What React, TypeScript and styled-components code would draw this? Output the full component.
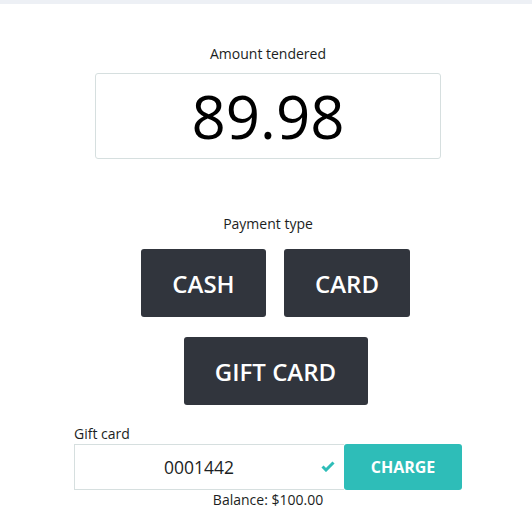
import styled, { createGlobalStyle } from 'styled-components';

const GlobalStyle = createGlobalStyle`
    body {
        margin: 0;
        background: #ffffff;
        font-family: 'Open Sans', 'Noto Sans', sans-serif;
        color: #1b1e22;
    }
`;

const StyledTopBar = styled.div`
    height: 4px;
    background-color: #edf0f5;
`;

const StyledPage = styled.div`
    display: flex;
    flex-direction: column;
    align-items: center;
    padding: 41px 0 0 4px;
`;

const StyledLabel = styled.div`
    font-size: 14px;
    line-height: 18px;
`;

const StyledAmount = styled.div`
    margin-top: 10px;
    width: 344px;
    height: 84px;
    border: 1px solid #d6dfdf;
    border-radius: 3px;
    display: flex;
    align-items: center;
    justify-content: center;
    font-size: 60px;
    line-height: 1;
    color: #000;
`;

const StyledPaymentSection = styled.div`
    margin-top: 56px;
    display: flex;
    flex-direction: column;
    align-items: center;
`;

const StyledButtonRow = styled.div`
    display: flex;
    gap: 18px;
    margin: 16px 0 0 15px;

    & + & {
        margin-top: 20px;
    }
`;

const StyledPayButton = styled.button<{ $width: number }>`
    width: ${(p) => p.$width}px;
    height: 68px;
    background-color: #31353d;
    color: #fff;
    border: none;
    border-radius: 3px;
    font-family: 'Open Sans', sans-serif;
    font-size: 24px;
    font-weight: 600;
    cursor: pointer;
`;

const StyledGiftCard = styled.div`
    margin-top: 20px;
    width: 388px;
`;

const StyledGiftRow = styled.div`
    display: flex;
    margin-top: 1px;
`;

const StyledGiftInput = styled.div`
    position: relative;
    flex: 1;
    height: 44px;
    padding-right: 21px;
    border: 1px solid #d6dfdf;
    border-right: none;
    display: flex;
    align-items: center;
    justify-content: center;
    font-size: 17.5px;
    color: #1b1e22;
`;

const StyledCheck = styled.svg`
    position: absolute;
    right: 9px;
    top: 16px;
`;

const StyledChargeButton = styled.button`
    width: 118px;
    height: 46px;
    background-color: #2ebdb8;
    color: #fff;
    border: none;
    border-radius: 3px;
    font-family: 'Open Sans', sans-serif;
    font-size: 16px;
    font-weight: 700;
    cursor: pointer;
`;

const StyledBalance = styled.div`
    text-align: center;
    font-size: 14px;
    line-height: 18px;
    margin-top: 1px;
`;

export default function App() {
    return (
        <>
            <GlobalStyle />
            <StyledTopBar />
            <StyledPage>
                <StyledLabel>Amount tendered</StyledLabel>
                <StyledAmount>89.98</StyledAmount>
                <StyledPaymentSection>
                    <StyledLabel>Payment type</StyledLabel>
                    <StyledButtonRow>
                        <StyledPayButton $width={125}>CASH</StyledPayButton>
                        <StyledPayButton $width={126}>CARD</StyledPayButton>
                    </StyledButtonRow>
                    <StyledButtonRow>
                        <StyledPayButton $width={184}>GIFT CARD</StyledPayButton>
                    </StyledButtonRow>
                </StyledPaymentSection>
                <StyledGiftCard>
                    <StyledLabel>Gift card</StyledLabel>
                    <StyledGiftRow>
                        <StyledGiftInput>
                            0001442
                            <StyledCheck width="14" height="11" viewBox="0 0 14 11">
                                <path d="M1.5 5.5 L5 9 L12.5 1.5" fill="none" stroke="#2ebdb8" strokeWidth="3" />
                            </StyledCheck>
                        </StyledGiftInput>
                        <StyledChargeButton>CHARGE</StyledChargeButton>
                    </StyledGiftRow>
                    <StyledBalance>Balance: $100.00</StyledBalance>
                </StyledGiftCard>
            </StyledPage>
        </>
    );
}
